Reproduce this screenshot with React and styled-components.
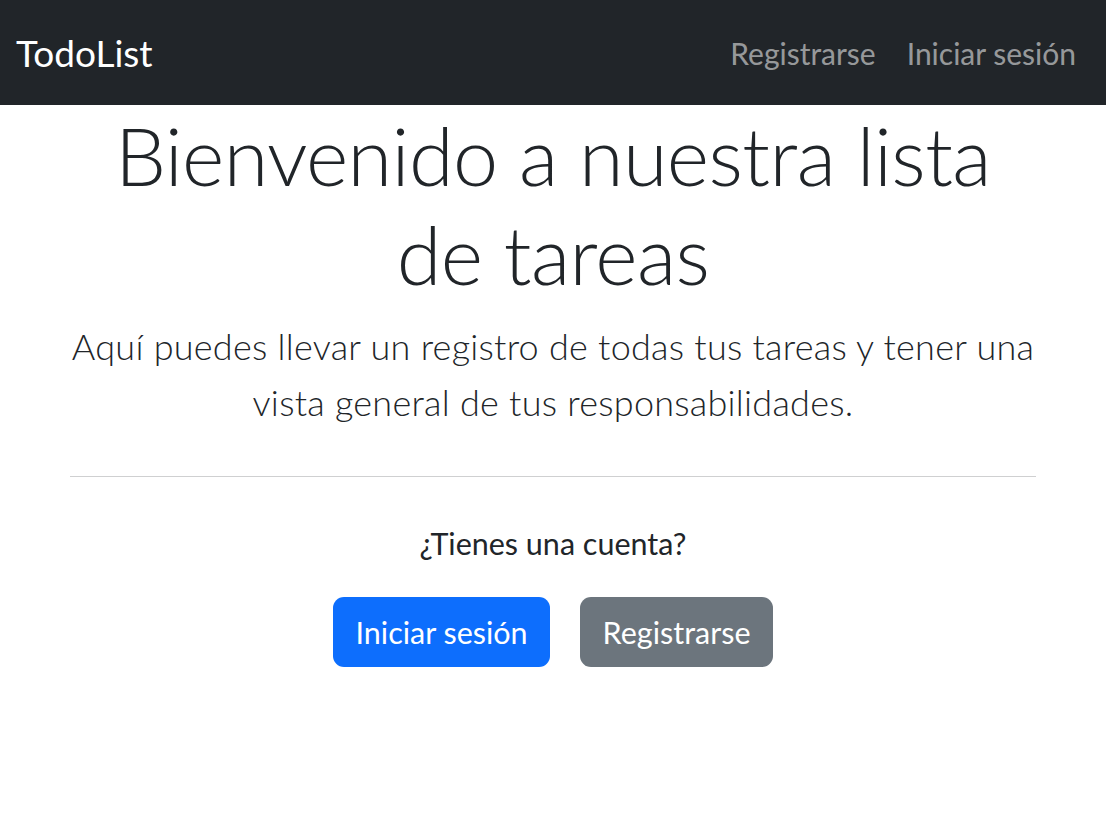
import React from 'react';
import styled, { createGlobalStyle } from 'styled-components';

const GlobalStyle = createGlobalStyle`
  body {
    margin: 0;
    background: #ffffff;
    color: #212529;
    font-family: Lato, 'Open Sans', sans-serif;
  }
  * { box-sizing: border-box; }
`;

const Navbar = styled.nav`
  height: 105px;
  background: #212529;
  display: flex;
  align-items: center;
  justify-content: space-between;
  padding: 0 30px 0 16px;
`;

const Brand = styled.a`
  color: #ffffff;
  font-size: 37px;
  text-decoration: none;
`;

const NavLinks = styled.div`
  display: flex;
  gap: 31px;
`;

const NavLink = styled.a`
  color: rgba(255, 255, 255, 0.55);
  font-size: 30px;
  text-decoration: none;
`;

const Main = styled.main`
  width: 966px;
  margin: 0 auto;
  text-align: center;
`;

const Title = styled.h1`
  margin: 0 0 15px;
  font-size: 81px;
  font-weight: 300;
  line-height: 99px;
  letter-spacing: -0.6px;
`;

const Lead = styled.p`
  margin: 0;
  font-size: 36px;
  font-weight: 300;
  line-height: 56px;
  letter-spacing: 0.25px;
`;

const Divider = styled.hr`
  margin: 46px 0 44px;
  border: 0;
  border-top: 1px solid #cfd0d1;
`;

const Question = styled.p`
  margin: 0 0 31px;
  font-size: 30.5px;
  line-height: 45px;
`;

const Actions = styled.div`
  display: flex;
  justify-content: center;
  gap: 30px;
`;

const Button = styled.a`
  display: inline-flex;
  align-items: center;
  height: 70px;
  padding: 0 22.5px;
  border-radius: 11px;
  color: #ffffff;
  font-size: 30.5px;
  text-decoration: none;
  background: ${(p) => (p.$variant === 'secondary' ? '#6c757d' : '#0d6efd')};
`;

export default function App() {
  return (
    <>
      <GlobalStyle />
      <Navbar>
        <Brand href="#">TodoList</Brand>
        <NavLinks>
          <NavLink href="#">Registrarse</NavLink>
          <NavLink href="#">Iniciar sesión</NavLink>
        </NavLinks>
      </Navbar>
      <Main>
        <Title>Bienvenido a nuestra lista de tareas</Title>
        <Lead>
          Aquí puedes llevar un registro de todas tus tareas y tener una vista general de tus
          responsabilidades.
        </Lead>
        <Divider />
        <Question>¿Tienes una cuenta?</Question>
        <Actions>
          <Button href="#">Iniciar sesión</Button>
          <Button href="#" $variant="secondary">Registrarse</Button>
        </Actions>
      </Main>
    </>
  );
}
